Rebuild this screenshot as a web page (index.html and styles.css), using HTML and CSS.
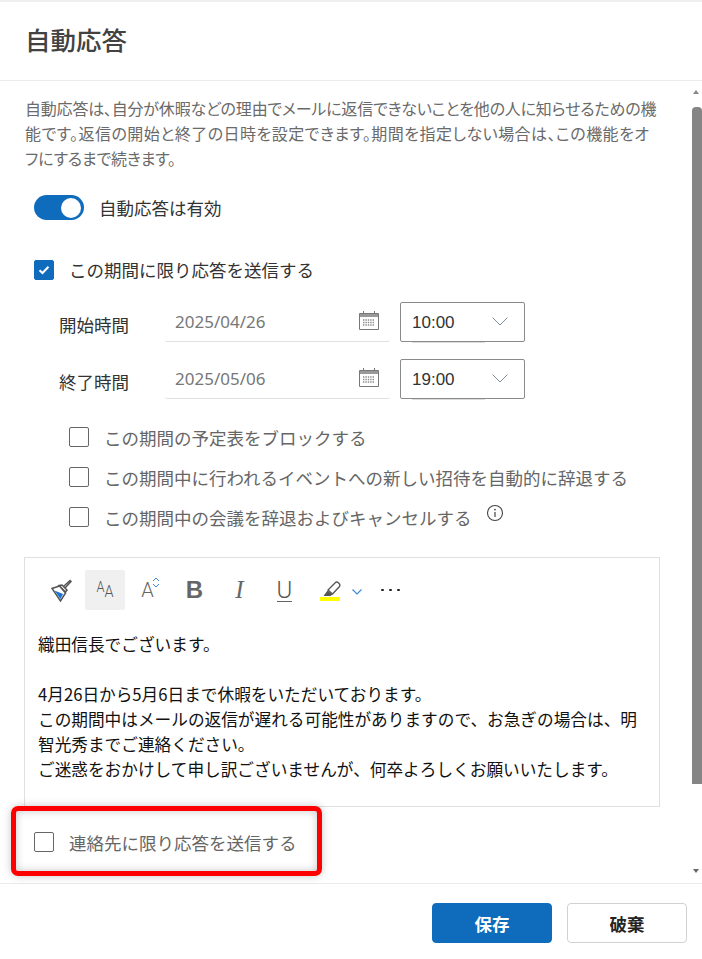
FILE: index.html
```html
<!DOCTYPE html>
<html lang="ja">
<head>
<meta charset="utf-8">
<title>自動応答</title>
<link rel="stylesheet" href="styles.css">
</head>
<body>
<div class="app">
  <header class="head"><h1 class="title">自動応答</h1></header>
  <div class="main">
    <div class="content">
      <p class="desc"><span class="line">自動応答は、自分が休暇などの理由でメールに返信できないことを他の人に知らせるための機</span><span class="line wide">能です。返信の開始と終了の日時を設定できます。期間を指定しない場合は、この機能をオ</span><span class="line">フにするまで続きます。</span></p>

      <div class="toggle-row">
        <span class="toggle"><span class="knob"></span></span>
        <span class="label dark">自動応答は有効</span>
      </div>

      <div class="check-row first">
        <span class="box checked">
          <svg width="12" height="10" viewBox="0 0 12 10"><path d="M1.5 5.2 4.5 8 10.5 1.8" fill="none" stroke="#fff" stroke-width="2"/></svg>
        </span>
        <span class="label dark">この期間に限り応答を送信する</span>
      </div>

      <div class="date-rows">
        <div class="date-row">
          <span class="date-label">開始時間</span>
          <div class="date-field">
            <span class="date-text">2025/04/26</span>
            <svg class="cal" width="20" height="19" viewBox="0 0 20 19"><path d="M4.5 0v3M15.5 0v3" stroke="#777" stroke-width="1"/><path d="M.5 2.5h19v16H.5z" fill="#fff" stroke="#777"/><path d="M1 3h18v3H1z" fill="#999"/><path d="M4 9h12M4 11.5h12M4 14h12" stroke="#8a8a8a" stroke-width="1.4" stroke-dasharray="1.4 1"/></svg>
          </div>
          <div class="time-field">
            <span class="time-text">10:00</span>
            <svg width="16" height="9" viewBox="0 0 16 9"><path d="M.5.5 8 8 15.500.5" fill="none" stroke="#7f8c99"/></svg>
          </div>
        </div>
        <div class="date-row">
          <span class="date-label">終了時間</span>
          <div class="date-field">
            <span class="date-text">2025/05/06</span>
            <svg class="cal" width="20" height="19" viewBox="0 0 20 19"><path d="M4.5 0v3M15.5 0v3" stroke="#777" stroke-width="1"/><path d="M.5 2.5h19v16H.5z" fill="#fff" stroke="#777"/><path d="M1 3h18v3H1z" fill="#999"/><path d="M4 9h12M4 11.5h12M4 14h12" stroke="#8a8a8a" stroke-width="1.4" stroke-dasharray="1.4 1"/></svg>
          </div>
          <div class="time-field">
            <span class="time-text">19:00</span>
            <svg width="16" height="9" viewBox="0 0 16 9"><path d="M.5.5 8 8 15.500.5" fill="none" stroke="#7f8c99"/></svg>
          </div>
        </div>
      </div>

      <div class="options">
        <div class="check-row"><span class="box"></span><span class="label">この期間の予定表をブロックする</span></div>
        <div class="check-row"><span class="box"></span><span class="label">この期間中に行われるイベントへの新しい招待を自動的に辞退する</span></div>
        <div class="check-row">
          <span class="box"></span><span class="label">この期間中の会議を辞退およびキャンセルする</span>
          <svg class="info" width="18" height="18" viewBox="0 0 18 18"><circle cx="9" cy="9" r="7.5" fill="none" stroke="#444" stroke-width="1.1"/><path d="M9 8v5" stroke="#444" stroke-width="1.2"/><circle cx="9" cy="5.6" r=".9" fill="#444"/></svg>
        </div>
      </div>

      <div class="editor">
        <div class="toolbar">
          <span class="tool">
            <svg class="brush" width="24" height="24" viewBox="0 0 24 24"><path d="M14.500 8.500 21 2.500l1 1-6 6.500" fill="#fff" stroke="#555" stroke-width="1.500"/><path d="M13 7l5 5-1.500 2L10 7.500z" fill="#fff" stroke="#555" stroke-width="1.500"/><path d="M10.500 8 3 10.500 11.500 23l5-8z" fill="#fff" stroke="#555" stroke-width="1.500"/><path d="M5.500 12.500 14 16l-2.500 5z" fill="#1a73d1"/></svg>
          </span>
          <span class="tool active"><span class="glyph-aa"><span class="a-small">A</span><span class="a-big">A</span></span></span>
          <span class="tool size"><span class="glyph-a">A</span><svg class="updown" width="8" height="11" viewBox="0 0 8 11"><path d="M1 4 4 1l3 3M1 7l3 3 3-3" fill="none" stroke="#3b86d8"/></svg></span>
          <span class="tool"><span class="glyph-b">B</span></span>
          <span class="tool"><span class="glyph-i">I</span></span>
          <span class="tool"><span class="glyph-u">U</span></span>
          <span class="tool">
            <svg class="pen" width="20" height="20" viewBox="0 0 20 20"><path d="M6 10 13.500 2.500c1.500-1.500 5.500 1.500 4 4L10.500 14z" fill="#fff" stroke="#555" stroke-width="1.300"/><path d="M5.500 10.500l5 4-2 1.500H1.500z" fill="#555"/></svg>
            <span class="swatch"></span>
          </span>
          <svg class="caret" width="10" height="6" viewBox="0 0 10 6"><path d="M.5.5 5 5 9.500.5" fill="none" stroke="#3b86d8" stroke-width="1.100"/></svg>
          <span class="dots"><i></i><i></i><i></i></span>
        </div>
        <div class="body-text">
          <p>織田信長でございます。</p>
          <p class="gap">4月26日から5月6日まで休暇をいただいております。</p>
          <p>この期間中はメールの返信が遅れる可能性がありますので、お急ぎの場合は、明智光秀までご連絡ください。</p>
          <p>ご迷惑をおかけして申し訳ございませんが、何卒よろしくお願いいたします。</p>
        </div>
      </div>

      <div class="check-row last"><span class="box"></span><span class="label">連絡先に限り応答を送信する</span></div>
    </div>
    <div class="scrollbar">
      <span class="arrow up"></span>
      <span class="thumb"></span>
      <span class="arrow down"></span>
    </div>
  </div>
  <footer class="foot">
    <button class="btn primary">保存</button>
    <button class="btn">破棄</button>
  </footer>
  <div class="highlight"></div>
</div>
</body>
</html>
```
FILE: styles.css
```css
* { box-sizing: border-box; }
html, body { margin: 0; padding: 0; background: #fff; }
body {
  font-family: "Noto Sans CJK JP", "Noto Sans", sans-serif;
  color: #666;
}
.app {
  position: relative;
  width: 702px;
  height: 959px;
  display: flex;
  flex-direction: column;
  border-top: 2px solid #f0f0f0;
  overflow: hidden;
}
.head {
  height: 79px;
  flex: none;
  border-bottom: 1px solid #edebe9;
  padding: 19px 0 0 25px;
}
.title {
  margin: 0;
  font-size: 25.500px;
  line-height: 36px;
  font-weight: 500;
  color: #424242;
}
.main {
  flex: 1;
  display: flex;
  min-height: 0;
}
.content {
  flex: 1;
  min-width: 0;
  overflow: hidden;
}
.desc {
  margin: 15px 0 0 25px;
  font-size: 16px;
  line-height: 25px;
  letter-spacing: -0.2px;
  color: #6a6a6a;
  font-feature-settings: "palt";
}
.line { display: block; white-space: nowrap; }
.line.wide { letter-spacing: 0.46px; }
.toggle-row {
  display: flex;
  align-items: center;
  gap: 15px;
  margin: 24px 0 0 34px;
  height: 25px;
}
.toggle {
  width: 50px;
  height: 25px;
  border-radius: 13px;
  background: #0f6cbd;
  display: flex;
  align-items: center;
  justify-content: flex-end;
  padding-right: 3px;
}
.knob {
  width: 20px;
  height: 20px;
  border-radius: 50%;
  background: #fff;
}
.label {
  font-size: 17.500px;
  line-height: 20px;
  color: #666;
  white-space: nowrap;
  position: relative;
  top: 1px;
}
.label.dark { color: #333; top: 0; }
.check-row {
  display: flex;
  align-items: center;
  gap: 15px;
  height: 20px;
}
.check-row.first { margin: 40px 0 0 34px; }
.check-row.last { margin: 25px 0 0 34px; }
.box {
  width: 20px;
  height: 20px;
  flex: none;
  border: 1px solid #666;
  border-radius: 2px;
  background: #fff;
  display: flex;
  align-items: center;
  justify-content: center;
}
.box.checked {
  background: #0f6cbd;
  border-color: #0f6cbd;
}
.date-rows {
  display: flex;
  flex-direction: column;
  gap: 17px;
  margin: 22px 0 0 59px;
}
.date-row {
  display: flex;
  height: 40px;
}
.date-label {
  width: 106px;
  font-size: 17.500px;
  line-height: 46px;
  color: #333;
  white-space: nowrap;
}
.date-field {
  width: 225px;
  height: 40px;
  border-bottom: 1px solid #e1e1e1;
  display: flex;
  align-items: center;
  justify-content: space-between;
  padding: 0 11px 0 10px;
  border-radius: 0 0 2px 2px;
}
.date-text {
  font-family: "Noto Sans", sans-serif;
  font-size: 17px;
  color: #777;
}
.cal { margin-top: -3px; }
.time-field {
  position: relative;
  width: 125px;
  height: 40px;
  margin-left: 10px;
  border: 1px solid #8a8a8a;
  border-radius: 2px;
  display: flex;
  align-items: center;
  justify-content: space-between;
  padding: 2px 16px 0 11px;
}
.time-field::after {
  content: "";
  position: absolute;
  left: 11px;
  bottom: -2px;
  width: 73px;
  height: 1px;
  background: #dcdcdc;
}
.time-field svg { margin-top: -4px; }
.time-text {
  font-family: "Liberation Sans", sans-serif;
  font-size: 17px;
  color: #333;
}
.options {
  display: flex;
  flex-direction: column;
  gap: 20px;
  margin: 28px 0 0 69px;
}
.info { margin: -8px 0 0 -1px; }
.editor {
  margin: 30px 0 0 24px;
  width: 636px;
  height: 250px;
  border: 1px solid #e0e0e0;
}
.toolbar {
  display: flex;
  align-items: center;
  height: 40px;
  margin: 12px 0 0 15px;
}
.tool {
  position: relative;
  width: 45px;
  height: 40px;
  flex: none;
  display: flex;
  align-items: center;
  justify-content: center;
}
.tool.size { width: 47px; }
.tool.active {
  width: 40px;
  background: #f0f0f0;
  border-radius: 2px;
}
.brush { margin-left: -3px; }
.glyph-aa { display: flex; align-items: flex-end; font-family: Roboto, sans-serif; font-weight: 300; color: #555; line-height: 1; transform: scaleX(.85); }
.a-small { font-size: 15px; margin-bottom: 5px; }
.a-big { font-size: 17px; }
.glyph-a { font-family: Roboto, sans-serif; font-weight: 300; font-size: 20px; color: #666; margin-left: -2px; }
.updown { position: absolute; left: 27px; top: 7px; }
.glyph-b { font-family: "Liberation Sans", sans-serif; font-weight: 700; font-size: 24px; color: #666; }
.glyph-i { font-family: "Liberation Serif", serif; font-style: italic; font-size: 25px; color: #666; }
.glyph-u { font-family: Roboto, sans-serif; font-weight: 300; font-size: 24px; color: #555; border-bottom: 1.500px solid #666; line-height: 22px; }
.pen { position: absolute; left: 15px; top: 10px; }
.swatch {
  position: absolute;
  left: 13px;
  top: 27px;
  width: 20px;
  height: 4px;
  background: #ff0;
}
.caret { margin: 4px 0 0 0; flex: none; }
.dots { display: flex; gap: 5.500px; margin-left: 19px; }
.dots i { width: 2.500px; height: 2.500px; background: #222; border-radius: 50%; }
.body-text {
  margin: 22px 12px 0 13px;
  font-size: 16.670px;
  line-height: 25px;
  color: #111;
}
.body-text p { margin: 0; }
.body-text p.gap { margin-top: 25px; }
.scrollbar {
  width: 10px;
  flex: none;
  display: flex;
  flex-direction: column;
  align-items: center;
  padding-top: 9px;
}
.thumb {
  width: 10px;
  height: 677px;
  margin-top: 13px;
  background: #858585;
  border-radius: 4px 4px 0 0;
}
.arrow {
  width: 0;
  height: 0;
  border-left: 3.500px solid transparent;
  border-right: 3.500px solid transparent;
  margin-right: 2px;
}
.arrow.up { border-bottom: 4px solid #888; }
.arrow.down { border-top: 4px solid #666; margin-top: 85px; }
.foot {
  height: 76px;
  flex: none;
  border-top: 1px solid #edebe9;
  display: flex;
  justify-content: flex-end;
  gap: 15px;
  padding: 19px 15px 0 0;
}
.btn {
  width: 120px;
  height: 40px;
  font-family: inherit;
  font-size: 17.500px;
  font-weight: 700;
  color: #242424;
  background: #fff;
  border: 1px solid #d1d1d1;
  border-radius: 4px;
  padding: 0;
}
.btn.primary {
  background: #0f6cbd;
  border-color: #0f6cbd;
  color: #fff;
}
.highlight {
  position: absolute;
  left: 11px;
  top: 804px;
  width: 311px;
  height: 70px;
  border: 5px solid #f00;
  border-radius: 7px;
  box-shadow: 0 0 8px rgba(0,0,0,.22), inset 0 0 8px rgba(0,0,0,.22);
  pointer-events: none;
}
```
